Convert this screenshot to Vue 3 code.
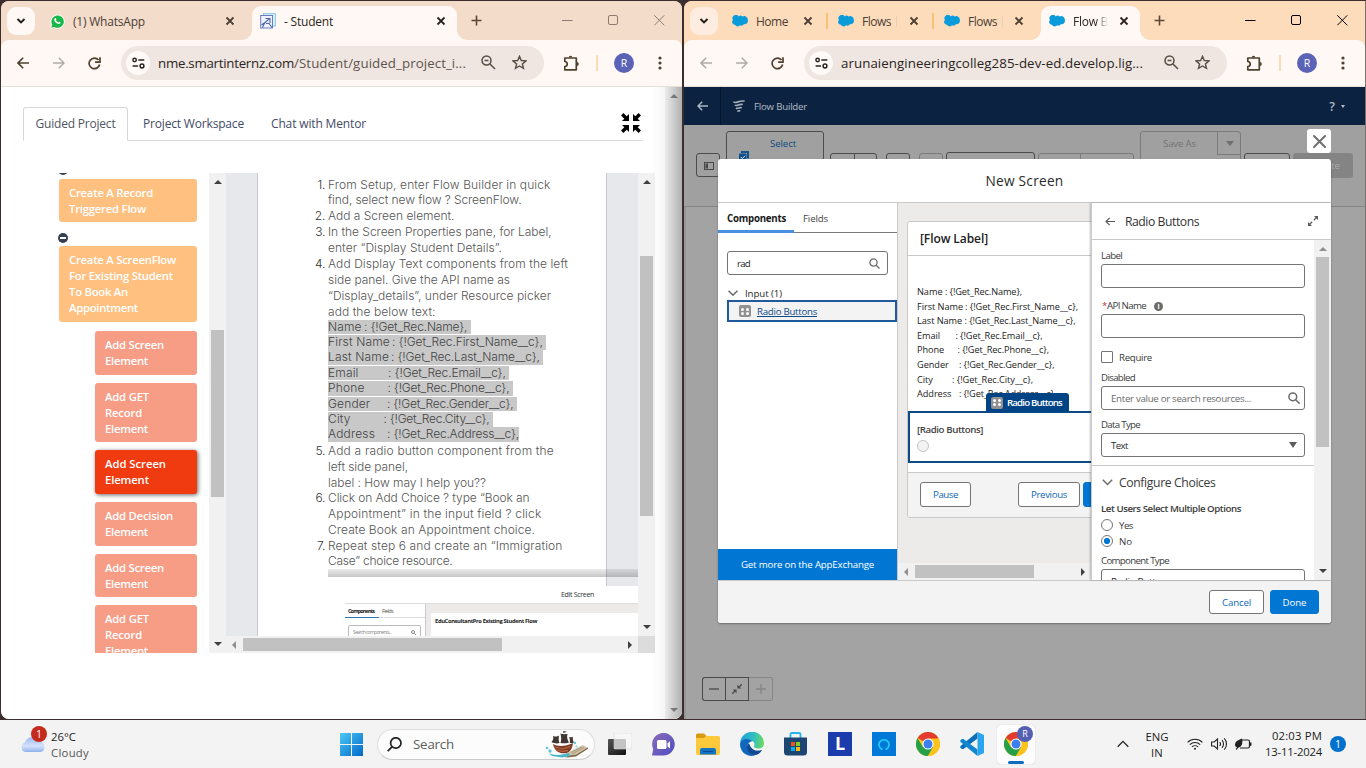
<script setup>
// Adjusts letter spacing so a label fills the given width.
const vFit = {
  mounted(el, { value }) {
    if (!value) return
    const natural = el.getBoundingClientRect().width
    const count = Array.from(el.textContent).length
    el.style.letterSpacing = ((value - natural) / count).toFixed(3) + 'px'
  }
}

const wins = [
  {
    id: 'left',
    url: ['nme.smartinternz.com', '/Student/guided_project_i...'],
    urlW: [136, 172],
    tabs: [
      { icon: 'wa', label: '(1) WhatsApp', w: 210, lw: 72 },
      { icon: 'st', label: '- Student', w: 205, lw: 49, active: true }
    ]
  },
  {
    id: 'right',
    url: ['arunaiengineeringcolleg285-dev-ed.develop.lig...', ''],
    urlW: [302, 0],
    tabs: [
      { icon: 'sf', label: 'Home', w: 106, lw: 32, sep: true },
      { icon: 'sf', label: 'Flows', w: 106, lw: 29, sep: true, bar: true },
      { icon: 'sf', label: 'Flows', w: 105, lw: 29, bar: true },
      { icon: 'sf', label: 'Flow B', w: 99, lw: 35, active: true, fade: true }
    ]
  }
]

const tree = [
  { lines: ['Create A Record', 'Triggered Flow'], w: [84, 77], kind: 'main', h: 43 },
  { dot: true },
  { lines: ['Create A ScreenFlow', 'For Existing Student', 'To Book An', 'Appointment'], w: [107, 104, 59, 69], kind: 'main', h: 76 },
  { lines: ['Add Screen', 'Element'], w: [59, 43], kind: 'sub', h: 44 },
  { lines: ['Add GET', 'Record', 'Element'], w: [44, 37, 43], kind: 'sub', h: 59 },
  { lines: ['Add Screen', 'Element'], w: [61, 44], kind: 'sub on', h: 44 },
  { lines: ['Add Decision', 'Element'], w: [68, 43], kind: 'sub', h: 44 },
  { lines: ['Add Screen', 'Element'], w: [59, 43], kind: 'sub', h: 43 },
  { lines: ['Add GET', 'Record', 'Element'], w: [44, 37, 43], kind: 'sub', h: 60 }
]

const steps = [
  [['From Setup, enter Flow Builder in quick', 222.5], ['find, select new flow ? ScreenFlow.', 193.5]],
  [['Add a Screen element.', 126.5]],
  [['In the Screen Properties pane, for Label,', 223.5], ['enter “Display Student Details”.', 174]],
  [['Add Display Text components from the left', 240], ['side panel. Give the API name as', 182], ['“Display_details”, under Resource picker', 223], ['add the below text:', 107.5]],
  [['Add a radio button component from the', 226], ['left side panel,', 80], ['label : How may I help you??', 158]],
  [['Click on Add Choice ? type “Book an', 201.5], ['Appointment” in the input field ? click', 213.5], ['Create Book an Appointment choice.', 207]],
  [['Repeat step 6 and create an “Immigration', 234.5], ['Case” choice resource.', 124.5]]
]

const picked = [
  ['Name', ': {!Get_Rec.Name}, ', 36, 106.5],
  ['First Name', ': {!Get_Rec.First_Name__c}, ', 64, 154],
  ['Last Name', ': {!Get_Rec.Last_Name__c}, ', 63, 152],
  ['Email', ': {!Get_Rec.Email__c}, ', 60, 121],
  ['Phone', ': {!Get_Rec.Phone__c}, ', 59.5, 125],
  ['Gender', ': {!Get_Rec.Gender__c}, ', 59, 129.5],
  ['City', ': {!Get_Rec.City__c}, ', 55.5, 109],
  ['Address', ': {!Get_Rec.Address__c},', 59, 132]
]

const merge = [
  ['Name', ': {!Get_Rec.Name},', 28, 77],
  ['First Name', ': {!Get_Rec.First_Name__c},', 48, 113],
  ['Last Name', ': {!Get_Rec.Last_Name__c},', 47.5, 111],
  ['Email', ': {!Get_Rec.Email__c},', 38.5, 87],
  ['Phone', ': {!Get_Rec.Phone__c},', 40.5, 91.5],
  ['Gender', ': {!Get_Rec.Gender__c},', 42, 95.5],
  ['City', ': {!Get_Rec.City__c},', 35, 81],
  ['Address', ': {!Get_Rec.Address__c},', 42, 97]
]
</script>

<template>
  <div class="screen">
    <div class="windows">
      <section v-for="w in wins" :key="w.id" class="win" :class="w.id">
        <header class="titlebar">
          <button class="drop"><svg width="10" height="8" viewBox="0 0 10 8"><path d="M1.5 2 5 5.5 8.500 2" fill="none" stroke="#1f1b17" stroke-width="1.9"/></svg></button>
          <div v-for="(t, i) in w.tabs" :key="i" class="tab" :class="{ active: t.active, sep: t.sep }" :style="{ width: t.w + 'px' }">
            <span class="fav">
              <svg v-if="t.icon === 'wa'" width="15" height="15" viewBox="0 0 15 15"><path d="M.3 14.800 1.300 11A7.100 7.100 0 1 1 4 13.800Z" fill="#fff"/><path d="M1.300 13.800 2.200 10.700A6.200 6.200 0 1 1 4.300 12.900Z" fill="#16b84a"/><path d="M5 4.200c.5-.5 1-.2 1.300.8.2.6-.3.8-.4 1.100.5 1.100 1.300 1.800 2.400 2.300.4-.2.6-.9 1.100-.7 1.100.5 1.500.7.9 1.600C9 11 5.500 9 4.500 6.900 4 5.800 4.300 4.800 5 4.200Z" fill="#fff"/></svg>
              <svg v-else-if="t.icon === 'st'" width="16" height="16" viewBox="0 0 16 16" fill="none"><rect x="3.500" y=".7" width="11.800" height="12.300" fill="#dff4fb" stroke="#7fc4e4"/><rect x=".7" y="2.500" width="11.800" height="12.500" fill="#eef4ff" stroke="#6a7cbb"/><path d="M1.500 12 5.500 9M2.500 14.500 4.500 10l5-4.500M5.500 5.500h4.500v4.500M6 10.500h3l3 4" stroke="#5266ab" stroke-width="1.100"/></svg>
              <svg v-else width="16" height="12" viewBox="0 0 16 12"><path d="M6.600 1.400A3 3 0 0 1 10.600 1.600 3.500 3.500 0 0 1 15.800 5 3.400 3.400 0 0 1 11.800 9.200 2.800 2.800 0 0 1 8.200 10.300 3.200 3.200 0 0 1 3 9.700 2.700 2.700 0 0 1 1 5 3.200 3.200 0 0 1 6.600 1.400Z" fill="#0a9bdb"/></svg>
            </span>
            <span class="tl" :class="{ fade: t.fade }"><span v-fit="t.lw">{{ t.label }}</span></span>
            <i v-if="t.bar" class="ghost"></i>
            <svg class="tx" width="10" height="10" viewBox="0 0 10 10"><path d="m1.500 1.500 7 7m0-7-7 7" stroke="currentColor" stroke-width="1.800"/></svg>
          </div>
          <svg class="plus" width="12" height="12" viewBox="0 0 12 12"><path d="M5.500 .5v10M.5 5.500h10" stroke="#5c4636" stroke-width="1.600"/></svg>
          <div class="ctl">
            <svg width="11" height="11" viewBox="0 0 11 11"><path d="M0 5.500h10.500" stroke="currentColor"/></svg>
            <svg width="11" height="11" viewBox="0 0 11 11"><rect x=".5" y=".5" width="9" height="9" rx="1.500" fill="none" stroke="currentColor"/></svg>
            <svg width="11" height="11" viewBox="0 0 11 11"><path d="m.3.3 10 10m0-10-10 10" stroke="currentColor"/></svg>
          </div>
        </header>
        <div class="toolbar">
          <svg class="back" width="12" height="12" viewBox="0 0 12 12" fill="none"><path d="M12 6H1M6.200.8 1 6l5.200 5.200" stroke="currentColor" stroke-width="1.600"/></svg>
          <svg class="fwd" width="12" height="12" viewBox="0 0 12 12" fill="none"><path d="M0 6h11M5.800.8 11 6l-5.200 5.200" stroke="#b3aaa4" stroke-width="1.500"/></svg>
          <svg class="reload" width="13" height="13" viewBox="0 0 13 13" fill="none"><path d="M11.600 7.500A5.300 5.300 0 1 1 10.500 3" stroke="#51402f" stroke-width="1.700"/><path d="M12 .3V5.200H7.100" stroke="#51402f" stroke-width="1.700"/></svg>
          <div class="omni">
            <span class="site"><svg width="13" height="12" viewBox="0 0 13 12" fill="none" stroke="#2b2420" stroke-width="1.500"><circle cx="2.600" cy="3" r="1.700"/><path d="M6.300 3h6M.6 9h5.500"/><circle cx="10" cy="9" r="1.900"/></svg></span>
            <span v-fit="w.urlW[0]" class="url">{{ w.url[0] }}</span><span v-fit="w.urlW[1]" class="url dim">{{ w.url[1] }}</span>
            <svg class="zo" width="15" height="15" viewBox="0 0 15 15" fill="none" stroke="#5a4d44" stroke-width="1.500"><circle cx="5.500" cy="5.500" r="4.500"/><path d="m9 9 5 5M3.500 5.500h4"/></svg>
            <svg class="star" width="15" height="15" viewBox="0 0 15 15" fill="none" stroke="#5a4d44" stroke-width="1.400"><path d="m7.500 1.300 1.800 4.200 4.600.4-3.500 3 1.100 4.500-4-2.400-4 2.400 1.100-4.500-3.500-3 4.600-.4Z"/></svg>
          </div>
          <svg class="ext" width="17" height="16" viewBox="0 0 17 16"><path d="M1.800 3h11.500v11.800H1.800v-3.300c3.200-.2 3.200-4.800 0-5Z" fill="none" stroke="#51402f" stroke-width="1.700" stroke-linejoin="round"/><path d="M5.700 2.500a1.800 1.800 0 0 1 3.600 0zM13.800 7a2 2 0 0 1 0 4z" fill="#51402f"/></svg>
          <i class="bar"></i>
          <span class="avatar">R</span>
          <svg class="dots" width="4" height="14" viewBox="0 0 4 14" fill="#51402f"><circle cx="2" cy="2" r="1.600"/><circle cx="2" cy="7" r="1.600"/><circle cx="2" cy="12" r="1.600"/></svg>
        </div>

        <div v-if="w.id === 'left'" class="page">
          <nav class="nav">
            <a class="on"><span v-fit="80">Guided Project</span></a>
            <a><span v-fit="101">Project Workspace</span></a>
            <a class="c"><span v-fit="95">Chat with Mentor</span></a>
            <svg class="comp" width="20" height="20" viewBox="0 0 20 20"><path d="M8 1v7H1l2.300-2.300L0 2.400 2.400 0l3.300 3.300Z"/><path d="M12 1v7h7l-2.300-2.300L20 2.400 17.600 0l-3.300 3.300ZM8 19v-7H1l2.300 2.300L0 17.600 2.400 20l3.300-3.300ZM12 19v-7h7l-2.300 2.300 3.300 3.300-2.400 2.400-3.300-3.300Z"/></svg>
          </nav>
          <div class="split">
            <div class="tree">
              <span class="cut"></span>
              <template v-for="(n, i) in tree" :key="i">
                <span v-if="n.dot" class="dot"></span>
                <div v-else class="node" :class="n.kind" :style="{ height: n.h + 'px' }">
                  <div v-for="(l, j) in n.lines" :key="j"><span v-fit="n.w[j]">{{ l }}</span></div>
                </div>
              </template>
            </div>
            <div class="vs tvs"><i class="up"></i><b></b><i class="down"></i></div>
            <div class="docwrap">
              <div class="row">
                <div class="doc">
                  <article class="paper">
                    <div v-for="(s, i) in steps" :key="i" class="step" :class="'s' + (i + 1)">
                      <em>{{ i + 1 }}.</em>
                      <div>
                        <p v-for="(l, j) in s" :key="j"><span v-fit="l[1]">{{ l[0] }}</span></p>
                        <div v-if="i === 3" class="picked">
                          <p v-for="(p, k) in picked" :key="k"><mark><span class="k" :style="{ width: p[2] + 'px' }">{{ p[0] }}</span><span v-fit="p[3]">{{ p[1] }}</span></mark></p>
                        </div>
                      </div>
                    </div>
                  </article>
                  <div class="shot">
                    <div class="shadow"><i></i></div>
                    <div class="shead"><span v-fit="33">Edit Screen</span></div>
                    <div class="sbody">
                      <div class="sleft">
                        <div class="stabs"><b v-fit="26">Components</b><span v-fit="11">Fields</span></div>
                        <div class="ssearch"><span v-fit="38">Search components...</span><svg width="5" height="5" viewBox="0 0 6 6" fill="none" stroke="#777"><circle cx="2.400" cy="2.400" r="1.800"/><path d="m4 4 2 2"/></svg></div>
                      </div>
                      <div class="sright"><div class="scard"><b v-fit="102">EduConsultantPro Existing Student Flow</b></div></div>
                    </div>
                  </div>
                </div>
                <div class="vs dvs"><i class="up"></i><b></b><i class="down"></i></div>
              </div>
              <div class="hs"><i class="lt"></i><b></b><i class="rt"></i><u></u></div>
            </div>
          </div>
          <div class="pvs"><i class="up"></i><i class="down"></i></div>
        </div>

        <div v-else class="flow">
          <div class="fhead">
            <span class="fback"><svg width="11" height="10" viewBox="0 0 11 10" fill="none" stroke="#a9b5c4" stroke-width="1.500"><path d="M11 5H1M5.200.8 1 5l4.200 4.200"/></svg></span>
            <svg class="flogo" width="12" height="12" viewBox="0 0 12 12" fill="none" stroke="#a3adb8" stroke-width="1.600"><path d="M.3 1.800C3.200 4.300 6-.3 11.600 1.200M1.800 5C4 7 6 3.200 9.800 4.600M3 8c1.800 1.400 3.200-1 5.800-.2M4.300 10.900c1 .5 1.800-.4 3-.2"/></svg>
            <span v-fit="53" class="ftitle">Flow Builder</span>
            <span class="help">?</span><i class="caret"></i>
          </div>
          <div class="fbar">
            <span class="b side"><svg width="10" height="8" viewBox="0 0 10 8"><rect x=".5" y=".5" width="9" height="7" fill="none" stroke="#4a4a4a"/><path d="M1.500 1.500h2.500v5H1.500z" fill="#4a4a4a"/></svg></span>
            <span class="b sel"><span v-fit="26">Select</span><svg width="10" height="10" viewBox="0 0 10 10"><path d="M2 0h8v7.500H8V2H2z" fill="#17508a"/><rect y="2.500" width="7.500" height="7.500" rx="1" fill="#0f4f91"/><path d="m1.800 6 1.500 1.600L6 4.800" fill="none" stroke="#ddd"/></svg></span>
            <span class="b b1"><i></i></span><span class="b b2"></span><span class="b b3 dis"></span><span class="b b4"></span><span class="b b5 dis"><i></i></span>
            <span class="b save dis"><span v-fit="33">Save As</span><i><s></s></i></span>
            <span class="b b6"></span><span class="b act"><span v-fit="9">te</span></span>
          </div>
          <div class="canvas">
            <div class="zoom">
              <span><svg width="10" height="10" viewBox="0 0 10 10"><path d="M0 5h10" stroke="#4a4a4a" stroke-width="1.300"/></svg></span>
              <span><svg width="10" height="10" viewBox="0 0 10 10" fill="#4a4a4a" stroke="#4a4a4a"><path d="M5.400.8v3.800h3.800ZM4.600 9.200V5.400H.8Z" stroke="none"/><path d="M9.700.3 7 3M.3 9.700 3 7" stroke-width="1.300"/></svg></span>
              <span class="z3"><svg width="10" height="10" viewBox="0 0 10 10"><path d="M0 5h10M5 0v10" stroke="#858585" stroke-width="1.300"/></svg></span>
            </div>
          </div>
          <span class="mclose"><svg width="13" height="13" viewBox="0 0 13 13"><path d="m1 1 11 11m0-11L1 12" stroke="#6f6f6f" stroke-width="2" stroke-linecap="round"/></svg></span>
          <div class="modal">
            <h2><span v-fit="78">New Screen</span></h2>
            <div class="mbody">
              <aside class="comps">
                <div class="ctabs"><b><span v-fit="59">Components</span></b><span v-fit="25">Fields</span></div>
                <div class="inp csearch"><span v-fit="13">rad</span><svg width="11" height="11" viewBox="0 0 11 11" fill="none" stroke="#6b6b6b" stroke-width="1.300"><circle cx="4.500" cy="4.500" r="3.600"/><path d="m7 7 3.500 3.500"/></svg></div>
                <div class="grp"><svg width="10" height="6" viewBox="0 0 10 6"><path d="m.5.8 4.500 4.300L9.500.8" fill="none" stroke="#6b6b6b" stroke-width="1.500"/></svg><span v-fit="37">Input (1)</span></div>
                <div class="rowitem"><span class="rb"><i></i><i></i><i></i><i></i></span><a v-fit="60">Radio Buttons</a></div>
                <div class="more"><span v-fit="133">Get more on the AppExchange</span></div>
              </aside>
              <main class="mid">
                <div class="card">
                  <h3><span v-fit="68">[Flow Label]</span></h3>
                  <div class="merge"><p v-for="(m, i) in merge" :key="i"><span class="k" :style="{ width: m[2] + 'px' }">{{ m[0] }}</span><span v-fit="m[3]">{{ m[1] }}</span></p></div>
                  <div class="fieldbox">
                    <span class="tag"><span class="rb"><i></i><i></i><i></i><i></i></span><span v-fit="55">Radio Buttons</span></span>
                    <b v-fit="66">[Radio Buttons]</b><i class="radio off"></i>
                  </div>
                  <div class="cfoot"><span class="btn pause"><span v-fit="25">Pause</span></span><span class="btn prev"><span v-fit="36">Previous</span></span><span class="btn next"></span></div>
                </div>
                <div class="mhs"><i class="lt"></i><b></b><i class="rt"></i></div>
              </main>
              <aside class="props">
                <div class="phead"><svg width="10" height="9" viewBox="0 0 10 9" fill="none" stroke="#5c5c5c" stroke-width="1.200"><path d="M10 4.500H1M4.700.8 1 4.500l3.700 3.700"/></svg><span v-fit="74">Radio Buttons</span>
                  <svg class="exp" width="10" height="10" viewBox="0 0 10 10" fill="#5c5c5c"><path d="M10 0v4L6 0ZM0 10V6l4 4Z"/><path d="M9 1 5.800 4.200M1 9l3.200-3.200" stroke="#5c5c5c" stroke-width="1.300"/></svg></div>
                <div class="pbody">
                  <div class="form">
                    <label><span v-fit="21">Label</span></label>
                    <div class="inp"></div>
                    <label class="l2"><em>*</em><span v-fit="39">API Name</span><i class="info">i</i></label>
                    <div class="inp"></div>
                    <div class="chk"><i></i><span v-fit="33">Require</span></div>
                    <label class="l3"><span v-fit="34">Disabled</span></label>
                    <div class="inp ph"><span v-fit="140">Enter value or search resources...</span><svg width="12" height="12" viewBox="0 0 12 12" fill="none" stroke="#6b6b6b" stroke-width="1.500"><circle cx="4.800" cy="4.800" r="3.900"/><path d="m7.700 7.700 4 4"/></svg></div>
                    <label class="l4"><span v-fit="39">Data Type</span></label>
                    <div class="inp sl"><span v-fit="17">Text</span><i class="car"></i></div>
                    <hr>
                    <div class="cfg"><svg width="11" height="7" viewBox="0 0 11 7"><path d="m.8.8 4.700 4.700L10.200.8" fill="none" stroke="#6b6b6b" stroke-width="1.500"/></svg><span v-fit="96.5">Configure Choices</span></div>
                    <div class="lead"><span v-fit="140">Let Users Select Multiple Options</span></div>
                    <div class="opt"><i class="radio"></i><span v-fit="14">Yes</span></div>
                    <div class="opt"><i class="radio sel"></i><span v-fit="13">No</span></div>
                    <label class="l5"><span v-fit="68">Component Type</span></label>
                    <div class="inp sl"><span v-fit="60">Radio Buttons</span></div>
                  </div>
                  <div class="pvs2"><i class="up g"></i><b></b><i class="down"></i></div>
                </div>
              </aside>
            </div>
            <footer><span class="btn cancel"><span v-fit="29">Cancel</span></span><span class="btn done"><span v-fit="24">Done</span></span></footer>
          </div>
        </div>
      </section>
    </div>

    <div class="taskbar">
      <svg class="weather" width="25" height="18" viewBox="0 0 25 18"><defs><linearGradient id="cl" x1="0" y1="0" x2="0" y2="1"><stop offset="0" stop-color="#9dbcf3"/><stop offset=".6" stop-color="#d5e2fb"/><stop offset="1" stop-color="#8fb1ec"/></linearGradient></defs><path d="M5 17a5 5 0 0 1 0-9.500C6.500 2 14 0 17.500 5.500 22 5.500 24.500 9 24.500 12c0 3-2 5-5 5Z" fill="url(#cl)"/></svg>
      <span class="wbadge">1</span>
      <div class="wtext"><div><span v-fit="25">26°C</span></div><div class="dim2"><span v-fit="38">Cloudy</span></div></div>
      <svg class="start" width="23" height="23" viewBox="0 0 23 23"><defs><linearGradient id="wl" x1="0" y1="0" x2="1" y2="1"><stop offset="0" stop-color="#4cc8f6"/><stop offset="1" stop-color="#0268c9"/></linearGradient></defs><path d="M0 0h11v11H0zM12 0h11v11H12zM0 12h11v11H0zM12 12h11v11H12z" fill="url(#wl)"/></svg>
      <div class="search">
        <svg width="15" height="15" viewBox="0 0 15 15" fill="none" stroke="#222" stroke-width="1.700"><circle cx="8.800" cy="6" r="5.200"/><path d="m5 9.800-4.300 4.400"/></svg>
        <span v-fit="41">Search</span>
        <svg class="ship" width="43" height="27" viewBox="0 0 43 27"><path d="M20 23 38 14l5 3-13 9-10 1Z" fill="#cfc3aa"/><path d="m22 25.500 9-1 12-7.500" fill="none" stroke="#7d6746" stroke-width="1.400"/><path d="M26 21.500 37 16M27 23l12-6.500" stroke="#a08f70" stroke-width=".8"/><path d="M4 22c5 3 13 2 20 0l1 3-8 1.500L7 25Z" fill="#49b7c8"/><circle cx="2" cy="17" r="1.300" fill="#64c6d5"/><circle cx="5" cy="20" r="1.700" fill="#64c6d5"/><circle cx="30" cy="12" r="1.200" fill="#64c6d5"/><circle cx="31.500" cy="15.500" r="1.100" fill="#8bd5de"/><path d="M8 13c4 2.500 12 3 20-1-.5 5-2.500 9-6.500 10-6 1.200-12-1-13.500-9Z" fill="#7d3c27"/><path d="m9.500 16 8 2 8-2.500M11 19l7 1.300 5-1" stroke="#b9653f" fill="none" stroke-width="1.200"/><path d="M8 5c3 1 4 .5 6-.5-.5 3-.5 5 .5 7.500-2.500.8-5 .5-8-1C8.500 9 8.500 7 8 5ZM15.500 2.500c3 1 4.500.5 7 .5-1 3 0 6 1.500 8.500-3 1-5.500 1-8.500.5 1-3 .8-6 0-9.500ZM24 6c1.500.5 2.500.3 4-.3-.5 2 0 4 1 5.800-1.500.6-3 .7-4.300.2C25.300 9.500 24.700 8 24 6ZM18 0l4 .8-3.500 1.300Z" fill="#403733"/></svg>
      </div>
      <svg class="tv" width="24" height="22" viewBox="0 0 24 22"><defs><linearGradient id="tv" x1="0" y1="0" x2="1" y2="1"><stop offset="0" stop-color="#555"/><stop offset="1" stop-color="#111"/></linearGradient></defs><rect y="6" width="18" height="16" rx="1" fill="url(#tv)"/><rect x="6" width="18" height="16" rx="1" fill="#f7f7f7" stroke="#dcdcdc" stroke-width=".6"/><rect x="6" y="6" width="12" height="10" fill="#c4c4c4"/></svg>
      <svg class="chat" width="23" height="23" viewBox="0 0 23 23"><defs><linearGradient id="ch" x1="0" y1="0" x2="1" y2="1"><stop offset="0" stop-color="#8b6bb8"/><stop offset="1" stop-color="#4b4fc4"/></linearGradient></defs><path d="M0 22.500 1.200 16A11.300 11.300 0 1 1 11.500 22.500Z" fill="url(#ch)"/><rect x="5" y="7" width="9.500" height="9" rx="1.500" fill="#fff"/><path d="m15.500 10.500 2.500-2.500v7.500l-2.500-2Z" fill="#fff"/></svg>
      <svg class="exr" width="24" height="22" viewBox="0 0 24 22"><path d="M0 2a1.500 1.500 0 0 1 1.500-1.500H8L10.500 3v5H0z" fill="#d99a12"/><path d="M0 5h8l2-2h12.500A1.500 1.500 0 0 1 24 4.500V20a2 2 0 0 1-2 2H2a2 2 0 0 1-2-2Z" fill="#fcc93a"/><path d="M4 21.500V17a2 2 0 0 1 2-2h12a2 2 0 0 1 2 2v4.500Z" fill="#1373c4"/><path d="M7 18.500h10" stroke="#0b4f93"/></svg>
      <svg class="edge" width="24" height="24" viewBox="0 0 24 24"><defs><linearGradient id="e1" x1="0" y1=".3" x2="1" y2=".4"><stop offset="0" stop-color="#1a9fe0"/><stop offset=".6" stop-color="#34c1bd"/><stop offset="1" stop-color="#6bd95f"/></linearGradient></defs><path d="M0 12A12 12 0 0 1 24 11.500c0 3.500-2.500 5-5.500 5-3.300 0-5-1.200-4.500-2.300.8-1.500.7-3.200-.8-4.500C9 6 1 7.500 0 12Z" fill="url(#e1)"/><path d="M0 12c1-5.500 8.500-6.500 12.500-3-3.500.5-5.500 3.500-5 7 .5 4 4 7 8 7.300C8 26 0 20.500 0 12Z" fill="#1068bd"/><path d="M9 11.500C5 15 8.500 22.500 15.500 21.500c3-.5 5-1.500 6.500-3.500-3 1.200-6 1.200-8.500-.3-2.300-1.400-3.800-3.500-4.500-6.200Z" fill="#124a91"/><path d="M9 11.500c-3.500 3-2 10 4 11.500 4 .5 7.500-1.500 9-5-3 1.200-6 1.200-8.500-.3-2.500-1.600-4-3.800-4.500-6.200Z" fill="#124a91"/></svg>
      <svg class="store" width="23" height="24" viewBox="0 0 23 24"><path d="M6.500 6V2.500Q6.500 1 8 1h7q1.500 0 1.500 1.500V6" fill="none" stroke="#23b3ea" stroke-width="1.800"/><path d="M0 5.500h23V20a3.500 3.500 0 0 1-3.500 3.500h-16A3.500 3.500 0 0 1 0 20Z" fill="#1d4571"/><path d="M7 10h4v4H7z" fill="#f1511b"/><path d="M12 10h4v4h-4z" fill="#80cc28"/><path d="M7 15h4v4H7z" fill="#00adef"/><path d="M12 15h4v4h-4z" fill="#fbbc09"/></svg>
      <span class="sq lbox">L</span>
      <span class="sq alexa"><svg width="12" height="13" viewBox="0 0 12 13"><path d="M4.500 11.500A5 5 0 1 1 7.500 11.500" fill="none" stroke="#20d0f7" stroke-width="1.600"/></svg></span>
      <svg class="chrome" width="24" height="24" viewBox="0 0 24 24"><circle cx="12" cy="12" r="12" fill="#fcc31e"/><path d="M12 12 1.600 6A12 12 0 0 1 22.400 6Z" fill="#e33b2e"/><path d="M1.600 6A12 12 0 0 0 12 24L17.200 15 12 12 6.800 15Z" fill="#26a046"/><path d="M12 6.500h10.700A12 12 0 0 1 12 24l5.200-9Z" fill="#fcc31e"/><circle cx="12" cy="12" r="5.600" fill="#fff"/><circle cx="12" cy="12" r="4.500" fill="#3d7fee"/></svg>
      <svg class="vsc" width="24" height="24" viewBox="0 0 24 24"><path d="M17.500 0v6.500L3.500 17 1.800 17 .3 15.500V14.200Z" fill="#0a6fb8"/><path d="M.3 9.800V8.500L1.800 7h1.700l14 10.500V24Z" fill="#1287cf"/><path d="M17.500 0 24 3v18l-6.500 3Z" fill="#2ba5ee"/></svg>
      <span class="cur">
        <svg width="24" height="24" viewBox="0 0 24 24"><circle cx="12" cy="12" r="12" fill="#fcc31e"/><path d="M12 12 1.600 6A12 12 0 0 1 22.400 6Z" fill="#e33b2e"/><path d="M1.600 6A12 12 0 0 0 12 24L17.200 15 12 12 6.800 15Z" fill="#26a046"/><path d="M12 6.500h10.700A12 12 0 0 1 12 24l5.200-9Z" fill="#fcc31e"/><circle cx="12" cy="12" r="5.600" fill="#fff"/><circle cx="12" cy="12" r="4.500" fill="#3d7fee"/></svg>
        <b>R</b><i></i>
      </span>
      <svg class="chev" width="12" height="8" viewBox="0 0 12 8"><path d="M.7 6.800 6 1.400l5.300 5.400" fill="none" stroke="#222" stroke-width="1.300"/></svg>
      <div class="lang"><div><span v-fit="23">ENG</span></div><div><span v-fit="12">IN</span></div></div>
      <svg class="wifi" width="16" height="12" viewBox="0 0 16 12" fill="none" stroke="#222" stroke-width="1.100"><path d="M.6 4.300a10.500 10.500 0 0 1 14.800 0M2.800 6.700a7.400 7.400 0 0 1 10.400 0M5 8.900a4.300 4.300 0 0 1 6 0"/><circle cx="8" cy="10.700" r="1" fill="#222" stroke="none"/></svg>
      <svg class="vol" width="17" height="14" viewBox="0 0 17 14" fill="none" stroke="#222" stroke-width="1.100"><path d="M.6 5v4h2.600l3.300 3V2L3.200 5ZM8.700 5a3 3 0 0 1 0 4M11 3.200a5.500 5.500 0 0 1 0 7.600M13.300 1.300a8.500 8.500 0 0 1 0 11.400"/></svg>
      <svg class="bat" width="17" height="12" viewBox="0 0 17 12"><path d="M7 2h6a1.500 1.500 0 0 1 1.500 1.500v5A1.500 1.500 0 0 1 13 10H5" fill="none" stroke="#222" stroke-width="1.200"/><path d="M15.700 4.500v3.300" stroke="#222" stroke-width="1.500"/><path d="M0 7c0-4 4-5 7-6.500C8 5 7 9 3.500 9.500L1.500 12 .8 11.300 2 9C1 9 0 8.500 0 7Z" fill="#222"/></svg>
      <div class="clock"><div><span v-fit="50">02:03 PM</span></div><div><span v-fit="57">13-11-2024</span></div></div>
      <span class="nbadge">1</span>
    </div>
  </div>
</template>

<style>
html, body { overflow: hidden; }
</style>

<style scoped>
* { box-sizing: border-box; margin: 0; padding: 0; }
.screen { width: 1366px; height: 768px; overflow: hidden; display: flex; flex-direction: column; font-family: "Open Sans", "Noto Sans", sans-serif; color: #222; white-space: nowrap; background: #f3f3f3; }
svg { flex: none; display: block; }
[class] > span { flex: none; }
span { display: inline-block; }
i, em { font-style: normal; }
.windows { height: 720px; display: flex; gap: 1px; padding: 1px 0 1px 1px; background: #3c2e2e; }
.win { width: 682px; height: 718px; display: flex; flex-direction: column; overflow: hidden; flex: none; }
.win.left { border-radius: 8px; width: 681px; margin-right: 1px; background: #f4dccb; }
.win.right { border-right: 1px solid #7c706c; border-radius: 8px 0 0 0; background: #fddcbc; }

.titlebar { height: 39px; display: flex; align-items: center; background: #f4dccb; flex: none; }
.right .titlebar { background: #fddcbc; }
.drop { width: 28px; height: 28px; margin: 0 7px 0 6px; border: 0; border-radius: 9px; background: #fff8f4; display: flex; align-items: center; justify-content: center; flex: none; }
.right .drop { margin-right: 6px; background: #ffece0; }
.tab { height: 34px; align-self: flex-end; display: flex; align-items: center; padding: 0 17px 4px 8px; flex: none; position: relative; color: #4c3f35; font-size: 12px; }
.tab.active { background: #fff8f4; border-radius: 9px 9px 0 0; padding-right: 11px; color: #2a2522; }
.tab.active::before, .tab.active::after { content: ""; position: absolute; bottom: 0; width: 10px; height: 10px; }
.tab.active::before { left: -10px; background: radial-gradient(circle at 0 0, transparent 9.500px, #fff8f4 10px); }
.tab.active::after { right: -10px; background: radial-gradient(circle at 100% 0, transparent 9.500px, #fff8f4 10px); }
.tab.sep::after { content: ""; position: absolute; right: 2px; top: 7px; width: 2px; height: 16px; background: #fbbf77; }
.fav { width: 16px; margin-right: 8px; }
.left .tab:not(.active) .fav { margin-right: 7px; }
.fade { -webkit-mask-image: linear-gradient(90deg, #000 65%, transparent); mask-image: linear-gradient(90deg, #000 65%, transparent); }
.ghost { width: 1px; height: 11px; background: #ecd0b4; margin-left: 5px; }
.tx { margin-left: auto; }
.plus { margin-left: 14px; }
.ctl { display: flex; gap: 35px; margin-left: auto; margin-right: 17px; color: #8b7b70; }
.right .ctl { color: #000; }

.toolbar { height: 47px; display: flex; align-items: center; background: #fff8f4; border-bottom: 1px solid #eadfd8; border-radius: 8px 8px 0 0; flex: none; }
.back { margin-left: 16px; color: #51402f; }
.right .back { color: #b3aaa4; }
.fwd { margin-left: 24px; }
.reload { margin-left: 23px; }
.omni { margin-left: 20px; width: 423px; height: 34px; border-radius: 17px; background: #efe6e1; display: flex; align-items: center; position: relative; flex: none; }
.site { width: 24px; height: 24px; border-radius: 50%; background: #fffaf7; margin: 0 8px 0 5px; display: flex; align-items: center; justify-content: center; }
.url { font-size: 13.300px; color: #2a2421; line-height: 20px; }
.url.dim { color: #5f554e; }
.zo { position: absolute; left: 360px; top: 9px; }
.star { position: absolute; left: 391px; top: 9px; }
.ext { margin-left: 19px; }
.bar { width: 2px; height: 16px; margin-left: 16px; background: #fbdcb9; }
.avatar { margin-left: 16px; width: 20px; height: 20px; border-radius: 50%; background: #5b63b7; color: #fff; font-size: 10.500px; line-height: 20px; text-align: center; }
.dots { margin-left: 24px; }

.page { flex: 1; background: #fff; position: relative; padding: 20px 0 0 22px; }
.page::after { content: ""; position: absolute; right: 0; top: 0; bottom: 0; width: 30px; background: linear-gradient(90deg, transparent, rgba(0,0,0,.04) 45%, rgba(0,0,0,.28)); }
.nav { width: 620px; height: 34px; display: flex; border-bottom: 1px solid #d5d8db; font-size: 12px; font-weight: 500; color: #3f4b66; line-height: 34px; }
.nav a { height: 33px; margin-left: 15px; }
.nav a.on { width: 105px; height: 34px; margin: 0; padding-left: 11.500px; line-height: 32px; border: 1px solid #d5d8db; border-bottom-color: #fff; border-radius: 3px 3px 0 0; background: #fff; color: #4f5660; }
.nav a.c { margin-left: 27px; }
.comp { margin-left: auto; margin-right: 2px; margin-top: 6px; }
.split { margin-top: 32px; height: 480px; width: 632px; display: flex; }
.tree { width: 186px; height: 480px; overflow: hidden; padding-left: 36px; position: relative; padding-top: 6px; color: #fff; font-size: 11.300px; font-weight: 550; }
.cut { position: absolute; top: -8px; left: 35px; width: 10px; height: 10px; border-radius: 50%; background: #344054; }
.dot { display: block; width: 10px; height: 10px; border-radius: 50%; background: #344054; margin: 11px 0 3px -1px; padding: 4px 2px; }
.dot::before { content: ""; display: block; height: 2px; background: #fff; }
.node { width: 138px; border-radius: 3px; padding: 6px 10px; line-height: 16px; overflow: hidden; }
.node div { height: 16px; }
.main { background: #ffc080; }
.sub { width: 102px; margin: 8px 0 0 36px; background: #f79c85; }
.main + .sub { margin-top: 9px; }
.sub.on { background: #f03a10; font-weight: 650; box-shadow: 1px 1px 4px rgba(0,0,0,.6); }
.vs { width: 17px; background: #f1f1f1; display: flex; flex-direction: column; align-items: center; flex: none; }
.up, .down, .lt, .rt { width: 0; height: 0; border: 4px solid transparent; flex: none; }
.up { border-top: 0; border-bottom-color: #404040; }
.down { border-bottom: 0; border-top-color: #404040; }
.lt { border-left: 0; border-right-color: #909090; }
.rt { border-right: 0; border-left-color: #404040; }
.vs .up { margin-top: 7px; }
.vs .down { margin-top: auto; margin-bottom: 7px; }
.vs b { width: 13px; background: #c1c1c1; }
.tvs b { margin-top: 146px; height: 167px; }
.dvs b { margin-top: 72px; height: 260px; }
.docwrap { width: 429px; }
.row { height: 463px; display: flex; }
.doc { width: 412px; height: 463px; background: #e6e8ec; padding-left: 31px; position: relative; overflow: hidden; }
.paper { width: 350px; height: 463px; background: #fff; border: 1px solid #c5c9cf; border-width: 0 1px; padding: 3.500px 0 0 55px; font-family: Inter, "Open Sans", sans-serif; font-weight: 300; font-size: 12px; color: #555; }
.step { display: flex; line-height: 15.900px; }
.step em { width: 12px; text-align: right; letter-spacing: -.3px; color: #333; }
.step p { height: 15.900px; white-space: pre; }
.step > div { margin-left: 3px; }
.s5, .s6, .s7 { line-height: 15.700px; }
.s5 p, .s6 p, .s7 p { height: 15.700px; }
.s5 { margin-top: .500px; }
.picked p { height: 15.430px; line-height: 14.500px; }
.picked mark { display: inline-block; height: 14.700px; background: #c8c8c8; color: #444; }
.picked .k { letter-spacing: .15px; }
.shot { position: absolute; left: 102px; top: 396px; width: 310px; height: 67px; font-size: 6px; }
.shadow { height: 17px; background: linear-gradient(rgba(0,0,0,.08), rgba(0,0,0,.22)) 0 0 / 100% 8px no-repeat; }
.shadow i { display: block; width: 279px; height: 17px; border-top: 8px solid transparent; border-radius: 0; }
.shead { height: 18px; background: linear-gradient(#ddd, #ddd) 17px 100% / 300px 1px no-repeat #fff; padding-left: 233px; font-size: 7px; line-height: 18px; color: #333; }
.sbody { display: flex; height: 32px; background: #fff; }
.sleft { width: 97px; padding-left: 17px; }
.stabs { display: flex; gap: 8px; padding-left: 3px; height: 14px; line-height: 14px; border-bottom: 1px solid #ddd; font-size: 5.500px; color: #555; position: relative; }
.stabs b { color: #222; }
.stabs::after { content: ""; position: absolute; left: 0; bottom: -1px; width: 34px; height: 1px; background: #2e78b8; }
.ssearch { margin: 7px 4px 0 3px; height: 14px; border: 1px solid #bbb; border-radius: 2px; display: flex; align-items: center; justify-content: space-between; padding: 0 4px; font-size: 5px; color: #888; }
.sright { flex: 1; background: #ecebea; border-left: 1px solid #ccc; padding: 9px 0 0 5px; }
.scard { background: #fff; height: 24px; line-height: 16px; padding-left: 4px; font-size: 5.800px; color: #222; }
.hs { height: 17px; background: #f1f1f1; display: flex; align-items: center; }
.hs .lt { margin-left: 6px; }
.hs b { margin-left: 7px; width: 259px; height: 13px; background: #c1c1c1; }
.hs .rt { margin-left: auto; margin-right: 6px; }
.hs u { width: 17px; height: 17px; background: #dcdcdc; }
.pvs { position: absolute; right: 0; top: 0; bottom: 0; width: 17px; background: #f3f3f3; display: flex; flex-direction: column; justify-content: space-between; align-items: center; padding: 7px 0; }
.pvs .up { border-bottom-color: #909090; }
.pvs .down { border-top-color: #909090; }

.flow { flex: 1; background: #a3a3a3; position: relative; font-size: 9.700px; }
.fhead { height: 38px; background: #0b2341; display: flex; align-items: center; color: #b4bcc6; }
.fback { width: 37px; height: 38px; border-right: 1px solid #061529; display: flex; align-items: center; padding-left: 13px; }
.flogo { margin-left: 12px; }
.ftitle { margin-left: 9px; }
.help { margin-left: auto; font-size: 12.500px; font-weight: 600; }
.caret { margin: 0 20px 0 6px; border: 2.500px solid transparent; border-top: 3px solid #b4bcc6; border-bottom: 0; }
.fbar { height: 82px; border-bottom: 1px solid #858585; display: flex; align-items: flex-start; padding: 28px 0 0 12px; color: #747474; background: #a0a0a0; }
.b { height: 24px; border: 1px solid #4c4c4c; border-radius: 3px; flex: none; position: relative; }
.b.dis { border-color: #7b7b7b; }
.side { width: 24px; padding: 8px 7px; }
.sel { width: 98px; height: 50px; margin: -22px 0 0 6px; color: #0f4a80; }
.sel > span { margin: 5px 0 0 43px; line-height: 13px; }
.sel svg { margin: 1px 0 0 12px; }
.b1 { width: 47px; margin-left: 6px; }
.b i { position: absolute; left: 50%; top: 0; height: 22px; border-left: 1px solid #4c4c4c; }
.b2 { width: 24px; margin-left: 9px; }
.b3 { width: 24px; margin-left: 9px; }
.b4 { width: 89px; margin: -1px 0 0 3px; }
.b5 { width: 96px; margin-left: 3px; }
.b5 i { left: 41px; border-color: #7b7b7b; }
.save { width: 101px; height: 50px; margin: -22px 0 0 6px; padding: 5px 0 0 22px; line-height: 13px; }
.save i { left: 76px; width: 24px; height: 23px; border-left: 1px solid #7b7b7b; border-bottom: 1px solid #7b7b7b; display: flex; justify-content: center; padding-top: 9px; }
.save s { width: 0; height: 0; border: 4px solid transparent; border-top: 5px solid #6e6e6e; border-bottom: 0; }
.b6 { width: 46px; margin-left: 3px; }
.act { width: 60px; height: 25px; margin-left: 3px; border: 0; background: #848484; color: #a8a8a8; padding: 5px 0 0 38px; line-height: 15px; }
.canvas { height: 512px; border-left: 2px solid #959595; }
.zoom { display: flex; padding: 470px 0 0 16px; }
.zoom span { width: 24px; height: 24px; border: 1px solid #4a4a4a; display: flex; align-items: center; justify-content: center; }
.zoom span:first-child { border-radius: 3px 0 0 3px; border-right: 0; width: 23px; }
.zoom .z3 { border-color: #858585; border-left: 0; border-radius: 0 3px 3px 0; }
.mclose { position: absolute; left: 623px; top: 42px; width: 24px; height: 24px; border-radius: 3px; background: #fff; display: flex; align-items: center; justify-content: center; }
.modal { position: absolute; left: 34px; top: 72px; width: 613px; height: 464px; border-radius: 3px; background: #fff; overflow: hidden; box-shadow: 0 1px 2px rgba(0,0,0,.35); }
.modal h2 { height: 44px; border-bottom: 1px solid #c9c9c9; text-align: center; font-size: 13.700px; font-weight: 400; line-height: 43px; color: #2b2b2b; }
.mbody { height: 377px; display: flex; }
.comps { width: 180px; border-right: 1px solid #c9c9c9; display: flex; flex-direction: column; }
.ctabs { height: 30px; border-bottom: 1px solid #7a7a7a; display: flex; line-height: 31px; color: #444; position: relative; }
.ctabs b { width: 76px; height: 30px; padding-left: 9px; border-bottom: 3px solid #4a90e2; font-weight: 700; color: #181818; }
.ctabs > span { margin-left: 9px; }
.inp { height: 24px; border: 1px solid #747474; border-radius: 3px; background: #fff; display: flex; align-items: center; padding-left: 9px; color: #2b2b2b; }
.inp svg { margin-left: auto; margin-right: 4px; }
.csearch { width: 161px; margin: 18px 0 0 9px; }
.csearch svg { margin-right: 7px; }
.grp { display: flex; align-items: center; height: 20px; margin: 8px 0 0 10px; gap: 7px; color: #2b2b2b; }
.rowitem { height: 22px; margin: -3px 0 0 9px; border: 2px solid #215a9c; background: #f3f3f3; display: flex; align-items: center; padding-left: 10px; gap: 6px; width: 170px; }
.rowitem a { color: #0b4a86; text-decoration: underline; }
.rb { width: 12px; height: 12px; border-radius: 2px; background: #919191; display: grid; grid-template-columns: 3px 3px; gap: 1px 2px; place-content: center; }
.rb i { width: 3px; height: 3px; background: #fff; border-radius: 1.500px; }
.more { margin-top: auto; height: 31px; background: #0176d3; color: #fff; text-align: center; line-height: 31px; font-weight: 500; }
.mid { width: 194px; overflow: hidden; background: #ecebea; padding: 18px 0 0 9px; position: relative; display: flex; flex-direction: column; }
.card { width: 260px; height: 297px; border: 1px solid #c9c9c9; border-radius: 3px; background: #fff; overflow: hidden; }
.card h3 { height: 34px; border-bottom: 1px solid #c9c9c9; padding-left: 12px; font-size: 12px; font-weight: 600; line-height: 34px; }
.merge { padding: 29px 0 0 9px; height: 155px; font-size: 9.200px; line-height: 14.600px; }
.merge p { height: 14.600px; white-space: pre; }
.merge .k { letter-spacing: -.05px; }
.fieldbox { height: 52px; border: 2px solid #0b4a86; position: relative; padding: 9px 0 0 7px; line-height: 15px; color: #444; }
.fieldbox b { display: inline-block; font-weight: 600; }
.tag { position: absolute; left: 76px; top: -20px; width: 83px; height: 19px; border-radius: 3px 3px 0 0; background: #014486; color: #fff; display: flex; align-items: center; gap: 4px; padding-left: 5px; font-weight: 600; }
.radio { display: block; width: 12px; height: 12px; border: 1px solid #747474; border-radius: 50%; background: #fff; }
.radio.off { background: #f3f3f3; border-color: #c4c4c4; margin-top: 3px; }
.cfoot { height: 45px; margin-top: 9px; background: #f3f3f3; border-top: 1px solid #c9c9c9; display: flex; padding: 9px 0 0 12px; }
.btn { height: 25px; border: 1px solid #747474; border-radius: 3px; background: #fff; color: #0f68b8; display: flex; align-items: center; justify-content: center; font-weight: 500; }
.pause { width: 51px; }
.prev { width: 62px; margin-left: 47px; }
.next { width: 40px; margin-left: 3px; background: #0176d3; border-color: #0176d3; }
.mhs { margin: auto 0 0 -9px; height: 17px; background: #f1f1f1; display: flex; align-items: center; padding: 0 6px; }
.mhs b { width: 119px; height: 13px; margin-left: 7px; background: #c1c1c1; }
.mhs .rt { margin-left: auto; }
.props { width: 240px; flex: none; border-left: 1px solid #c9c9c9; box-shadow: -1px 0 2px rgba(0,0,0,.25); position: relative; background: #fff; }
.phead { height: 37px; border-bottom: 1px solid #c9c9c9; display: flex; align-items: center; padding-left: 13px; gap: 10px; font-size: 12.200px; color: #333; }
.exp { margin-left: auto; margin-right: 13px; }
.pbody { height: 340px; display: flex; overflow: hidden; }
.form { width: 222px; padding: 8px 9px 0; color: #3b3b3b; }
.form label { display: flex; height: 16px; line-height: 15px; }
.l2 { margin-top: 10px; }
.l2 em { color: #c23934; width: 6px; padding-left: 1px; }
.info { width: 9px; height: 9px; border-radius: 50%; background: #6b6b6b; color: #fff; font-size: 7px; font-weight: 700; line-height: 9px; text-align: center; margin: 4px 0 0 8px; }
.chk { display: flex; align-items: center; height: 16px; margin-top: 11px; gap: 6px; }
.chk i { width: 12px; height: 12px; border: 1px solid #747474; border-radius: 1px; }
.l3 { margin-top: 5px; }
.l4 { margin-top: 7px; }
.l5 { margin-top: 4px; }
.ph { color: #6b6b6b; }
.car { border: 4px solid transparent; border-top: 6px solid #5c5c5c; border-bottom: 0; margin-left: auto; margin-right: 7px; }
.form hr { border: 0; height: 1px; background: #c9c9c9; margin: 8px -9px 0; }
.cfg { display: flex; align-items: center; height: 19px; margin-top: 7px; gap: 6px; padding-left: 1px; font-size: 12.200px; }
.lead { height: 16px; line-height: 16px; margin-top: 9px; font-weight: 600; }
.opt { display: flex; align-items: center; height: 16px; gap: 6px; }
.radio.sel { width: 12px; height: 12px; margin: 0; background: radial-gradient(circle, #0176d3 2.800px, #fff 3.400px); }
.pvs2 { width: 17px; flex: none; background: #f1f1f1; display: flex; flex-direction: column; align-items: center; }
.pvs2 .up { margin-top: 7px; border-bottom-color: #909090; }
.pvs2 b { width: 13px; height: 190px; margin-top: 6px; background: #c1c1c1; }
.pvs2 .down { margin-top: auto; margin-bottom: 7px; }
.modal footer { height: 43px; background: #f3f3f3; border-top: 1px solid #c9c9c9; display: flex; justify-content: flex-end; padding: 9px 12px 0 0; gap: 6px; }
footer .btn { height: 24px; }
.cancel { width: 55px; }
.done { width: 49px; background: #0176d3; border-color: #0176d3; color: #fff; }

.taskbar { height: 48px; background: #f3f3f3; display: flex; align-items: center; padding-left: 20px; color: #1c1c1c; font-size: 11.300px; line-height: 16px; }
.wbadge, .nbadge { width: 16px; height: 16px; border-radius: 50%; color: #fff; text-align: center; font-size: 10.500px; }
.wbadge { background: #c42b1c; margin: -20px 0 0 -14px; z-index: 1; }
.wtext { width: 60px; margin: 1px 0 0 4px; }
.dim2 { color: #555; }
.start { margin-left: 229px; margin-top: 1px; }
.search { width: 218px; height: 31px; margin-left: 14px; border: 1px solid #dedede; border-bottom-color: #cbcbcb; border-radius: 16px; background: #fcfcfc; display: flex; align-items: center; padding-left: 9px; font-size: 13.300px; color: #5c5c5c; }
.search > span { margin-left: 11px; line-height: 20px; }
.ship { margin-left: auto; margin-right: 6px; }
.tv { margin-left: 13px; }
.chat { margin-left: 20px; }
.exr { margin-left: 21px; }
.edge { margin-left: 20px; }
.store { margin-left: 20px; }
.sq { width: 24px; height: 24px; margin-left: 20px; flex: none; }
.lbox { margin-left: 21px; background: #1b3cab; color: #fff; font-weight: 700; font-size: 18px; line-height: 23px; text-align: center; }
.alexa { background: #0078d7; display: flex; align-items: center; justify-content: center; }
.chrome, .vsc { margin-left: 20px; }
.cur { width: 38px; height: 39px; margin-left: 13px; background: #fdfdfd; border-radius: 4px; padding: 7px; position: relative; box-shadow: 0 0 1px rgba(0,0,0,.25); }
.cur b { position: absolute; left: 20px; top: 1px; width: 16px; height: 16px; border-radius: 50%; background: #5560b4; color: #fff; font-size: 9px; text-align: center; font-weight: 400; }
.cur i { position: absolute; left: 11px; bottom: 0; width: 16px; height: 3px; border-radius: 2px; background: #0f6cbd; }
.chev { margin-left: 82px; }
.lang { width: 24px; margin: 1px 0 0 16px; text-align: center; }
.wifi { margin-left: 18px; }
.vol { margin-left: 8px; }
.bat { margin-left: 7px; }
.clock { width: 58px; text-align: right; margin-left: 12px; }
.nbadge { background: #0072ce; margin-left: 8px; }
</style>
